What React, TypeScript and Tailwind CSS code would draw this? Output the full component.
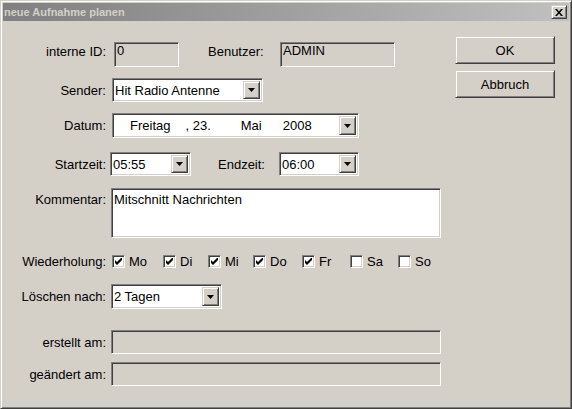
import React from "react";

// sunken edit field look (win classic)
const sunken =
  "border border-t-[#808080] border-l-[#808080] border-b-white border-r-white shadow-[inset_1px_1px_0_#404040,inset_-1px_-1px_0_#d4d0c8]";
const raised =
  "border border-t-[#d4d0c8] border-l-[#d4d0c8] border-b-[#404040] border-r-[#404040] shadow-[inset_1px_1px_0_#fff,inset_-1px_-1px_0_#808080]";

function DropButton() {
  return (
    <div className={`${raised} bg-[#d4d0c8] w-[17px] self-stretch m-[2px] flex items-center justify-center`}>
      <svg width="7" height="4" viewBox="0 0 7 4">
        <path d="M0 0h7L3.5 4z" fill="#000" />
      </svg>
    </div>
  );
}

function Combo({ text, className }: { text: React.ReactNode; className: string }) {
  return (
    <div className={`${sunken} bg-white flex items-stretch ${className}`}>
      <div className="flex-1 flex items-center pl-[2px] leading-none">{text}</div>
      <DropButton />
    </div>
  );
}

function Label({ children, className = "" }: { children: React.ReactNode; className?: string }) {
  return <div className={`w-[103px] shrink-0 text-right leading-none ${className}`}>{children}</div>;
}

function Check({ label, checked, w }: { label: string; checked: boolean; w: string }) {
  return (
    <div className={`flex items-center ${w}`}>
      <div className={`${sunken} bg-white w-[13px] h-[13px] flex items-center justify-center`}>
        {checked && (
          <svg width="7" height="7" viewBox="0 0 7 7">
            <path d="M0 2v3l2 2 5-5V-1L2 4z" fill="#000" />
          </svg>
        )}
      </div>
      <span className="ml-[4px] leading-none">{label}</span>
    </div>
  );
}

export default function App() {
  return (
    <div
      className="w-[572px] h-[409px] bg-[#d4d0c8] text-black text-[13px] border border-t-[#d4d0c8] border-l-[#d4d0c8] border-r-[#404040] border-b-[#404040] shadow-[inset_1px_1px_0_#fff,inset_-1px_-1px_0_#808080] p-[2px] flex flex-col overflow-hidden"
      style={{ fontFamily: '"Liberation Sans", Arial, sans-serif' }}
    >
      {/* title bar */}
      <div className="h-[18px] shrink-0 bg-gradient-to-r from-[#808080] to-[#c0c0c0] flex items-center justify-between pl-[1px] pr-[2px]">
        <span className="text-[11px] font-bold text-[#d4d0c8] leading-none">neue Aufnahme planen</span>
        <div className={`${raised} bg-[#d4d0c8] w-[16px] h-[14px] flex items-center justify-center`}>
          <svg width="8" height="7" viewBox="0 0 8 7">
            <path d="M0 0h2l2 2.5L6 0h2L5 3.5 8 7H6L4 4.5 2 7H0l3-3.5z" fill="#000" />
          </svg>
        </div>
      </div>

      <div className="flex flex-1">
        {/* form */}
        <div className="flex flex-col w-[440px]">
          <div className="flex items-start mt-[21px] h-[25px]">
            <Label className="mt-[3px]">interne ID:</Label>
            <div className={`${sunken} ml-[8px] w-[65px] h-[25px] pl-[2px] pt-[1px] leading-none`}>0</div>
            <div className="ml-[29px] w-[55px] mt-[3px] leading-none">Benutzer:</div>
            <div className={`${sunken} ml-[17px] w-[115px] h-[25px] pl-[2px] pt-[1px] leading-none`}>ADMIN</div>
          </div>

          <div className="flex items-center mt-[11px]">
            <Label>Sender:</Label>
            <Combo text="Hit Radio Antenne" className="ml-[6px] w-[151px] h-[24px]" />
          </div>

          <div className="flex items-center mt-[11px]">
            <Label>Datum:</Label>
            <Combo
              className="ml-[6px] w-[247px] h-[25px]"
              text={
                <span className="flex">
                  <span className="ml-[15px]">Freitag</span>
                  <span className="ml-[15px]">, 23.</span>
                  <span className="ml-[30px]">Mai</span>
                  <span className="ml-[21px]">2008</span>
                </span>
              }
            />
          </div>

          <div className="flex items-center mt-[14px]">
            <Label>Startzeit:</Label>
            <Combo text="05:55" className="ml-[4px] w-[81px] h-[24px]" />
            <div className="ml-[27px] w-[50px] leading-none">Endzeit:</div>
            <Combo text="06:00" className="ml-[11px] w-[80px] h-[24px]" />
          </div>

          <div className="flex items-start mt-[12px]">
            <Label className="mt-[5px]">Kommentar:</Label>
            <div className={`${sunken} bg-white ml-[5px] w-[330px] h-[50px] pl-[2px] pt-[4px] leading-none`}>
              Mitschnitt Nachrichten
            </div>
          </div>

          <div className="flex items-center mt-[17px] h-[13px]">
            <Label>Wiederholung:</Label>
            <div className="flex ml-[6px]">
              <Check label="Mo" checked w="w-[51px]" />
              <Check label="Di" checked w="w-[45px]" />
              <Check label="Mi" checked w="w-[45px]" />
              <Check label="Do" checked w="w-[49px]" />
              <Check label="Fr" checked w="w-[48px]" />
              <Check label="Sa" checked={false} w="w-[48px]" />
              <Check label="So" checked={false} w="w-[40px]" />
            </div>
          </div>

          <div className="flex items-center mt-[16px]">
            <Label>Löschen nach:</Label>
            <Combo text="2 Tagen" className="ml-[5px] w-[111px] h-[25px]" />
          </div>

          <div className="flex items-center mt-[21px]">
            <Label>erstellt am:</Label>
            <div className={`${sunken} ml-[5px] w-[330px] h-[24px]`} />
          </div>

          <div className="flex items-center mt-[8px]">
            <Label>geändert am:</Label>
            <div className={`${sunken} ml-[5px] w-[330px] h-[24px]`} />
          </div>
        </div>

        {/* buttons */}
        <div className="flex flex-col ml-[12px] mt-[15px]">
          <button className={`${raised} bg-[#d4d0c8] w-[100px] h-[28px] leading-none`}>OK</button>
          <button className={`${raised} bg-[#d4d0c8] w-[100px] h-[28px] mt-[6px] leading-none`}>Abbruch</button>
        </div>
      </div>
    </div>
  );
}
